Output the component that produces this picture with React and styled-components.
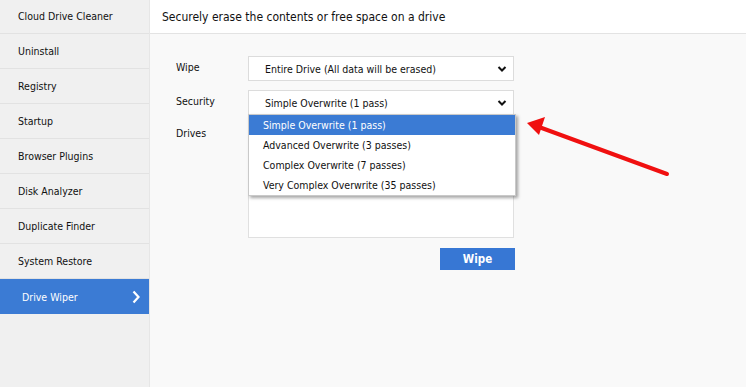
import React from "react";
import styled, { createGlobalStyle } from "styled-components";

const Global = createGlobalStyle`
  html, body { margin: 0; padding: 0; }
  body {
    font-family: "DejaVu Sans Condensed", "DejaVu Sans", "Liberation Sans", sans-serif;
    font-stretch: condensed;
    color: #111;
  }
  #root { width: 746px; height: 387px; overflow: hidden; }
`;

const Frame = styled.div`
  display: flex;
  width: 746px;
  height: 387px;
  background: #f9f9f9;
`;

const Sidebar = styled.nav`
  width: 149px;
  flex: none;
  background: #f0f0f0;
  border-right: 1px solid #e6e6e6;
  display: flex;
  flex-direction: column;
  margin-top: -1px;
`;

const NavItem = styled.div`
  flex: none;
  height: ${(p) => (p.$active ? "35px" : "34px")};
  border-bottom: ${(p) => (p.$active ? "none" : "1px solid #e2e2e2")};
  background: ${(p) => (p.$active ? "#3b7bd4" : "transparent")};
  color: ${(p) => (p.$active ? "#fff" : "#111")};
  display: flex;
  align-items: center;
  justify-content: space-between;
  padding: 0 8px 0 ${(p) => (p.$active ? "22px" : "18px")};
  font-size: 10.5px;
`;

const Main = styled.div`
  flex: 1;
  display: flex;
  flex-direction: column;
  position: relative;
`;

const Header = styled.div`
  height: 33px;
  background: #fff;
  border-bottom: 1px solid #e3e3e3;
  display: flex;
  align-items: center;
  padding-left: 12px;
  font-size: 12px;
  color: #111;
`;

const Form = styled.div`
  padding: 22px 0 0 26px;
  display: grid;
  grid-template-columns: 72px 266px;
  row-gap: 9px;
  align-items: start;
`;

const Label = styled.div`
  font-size: 10.5px;
  line-height: 14px;
  padding-top: ${(p) => p.$pt || "4px"};
`;

const Select = styled.div`
  height: 23px;
  border: 1px solid #dcdcdc;
  background: #fff;
  display: flex;
  align-items: center;
  justify-content: space-between;
  padding: 0 6px 0 16px;
  font-size: 10.5px;
  position: relative;
`;

const Menu = styled.div`
  position: absolute;
  left: -1px;
  top: 23px;
  width: 266px;
  background: #fff;
  border: 1px solid #c9c9c9;
  box-shadow: 2px 2px 3px rgba(0, 0, 0, 0.35);
  z-index: 2;
`;

const Option = styled.div`
  height: 20px;
  display: flex;
  align-items: center;
  padding-left: 14px;
  font-size: 10.5px;
  background: ${(p) => (p.$sel ? "#3b7bd4" : "#fff")};
  color: ${(p) => (p.$sel ? "#fff" : "#111")};
`;

const DriveBox = styled.div`
  height: 112px;
  border: 1px solid #e0e0e0;
  background: #fff;
`;

const ButtonRow = styled.div`
  grid-column: 2;
  display: flex;
  justify-content: flex-end;
  padding-top: 1px;
  margin-right: -1px;
`;

const Button = styled.button`
  width: 75px;
  height: 22px;
  border: none;
  background: #3777d4;
  color: #fff;
  font-family: inherit;
  font-stretch: condensed;
  font-weight: bold;
  font-size: 11.5px;
  padding: 0;
`;

const ArrowSvg = styled.svg`
  position: absolute;
  left: 369px;
  top: 109px;
  pointer-events: none;
`;

const Chevron = () => (
  <svg width="10" height="8" viewBox="0 0 10 8">
    <path d="M1.5 2 L5 5.5 L8.5 2" fill="none" stroke="#111" strokeWidth="2" />
  </svg>
);

const items = [
  "Cloud Drive Cleaner",
  "Uninstall",
  "Registry",
  "Startup",
  "Browser Plugins",
  "Disk Analyzer",
  "Duplicate Finder",
  "System Restore",
  "Drive Wiper",
];

const options = [
  "Simple Overwrite (1 pass)",
  "Advanced Overwrite (3 passes)",
  "Complex Overwrite (7 passes)",
  "Very Complex Overwrite (35 passes)",
];

export default function App() {
  return (
    <>
      <Global />
      <Frame>
        <Sidebar>
          {items.map((t) => (
            <NavItem key={t} $active={t === "Drive Wiper"}>
              <span>{t}</span>
              {t === "Drive Wiper" && (
                <svg width="10" height="14" viewBox="0 0 10 14">
                  <path d="M2.5 1.5 L7.5 7 L2.5 12.5" fill="none" stroke="#fff" strokeWidth="2.2" />
                </svg>
              )}
            </NavItem>
          ))}
        </Sidebar>
        <Main>
          <Header>Securely erase the contents or free space on a drive</Header>
          <Form>
            <Label>Wipe</Label>
            <Select>
              <span>Entire Drive (All data will be erased)</span>
              <Chevron />
            </Select>
            <Label>Security</Label>
            <Select>
              <span>Simple Overwrite (1 pass)</span>
              <Chevron />
              <Menu>
                {options.map((o, i) => (
                  <Option key={o} $sel={i === 0}>{o}</Option>
                ))}
              </Menu>
            </Select>
            <Label $pt="2px">Drives</Label>
            <DriveBox />
            <ButtonRow>
              <Button>Wipe</Button>
            </ButtonRow>
          </Form>
          <ArrowSvg width="160" height="80" viewBox="0 0 160 80">
            <path d="M148 65 L20 18" stroke="#f01010" strokeWidth="4" strokeLinecap="round" />
            <path d="M8 14 L26 8 L20 26 Z" fill="#f01010" />
          </ArrowSvg>
        </Main>
      </Frame>
    </>
  );
}
